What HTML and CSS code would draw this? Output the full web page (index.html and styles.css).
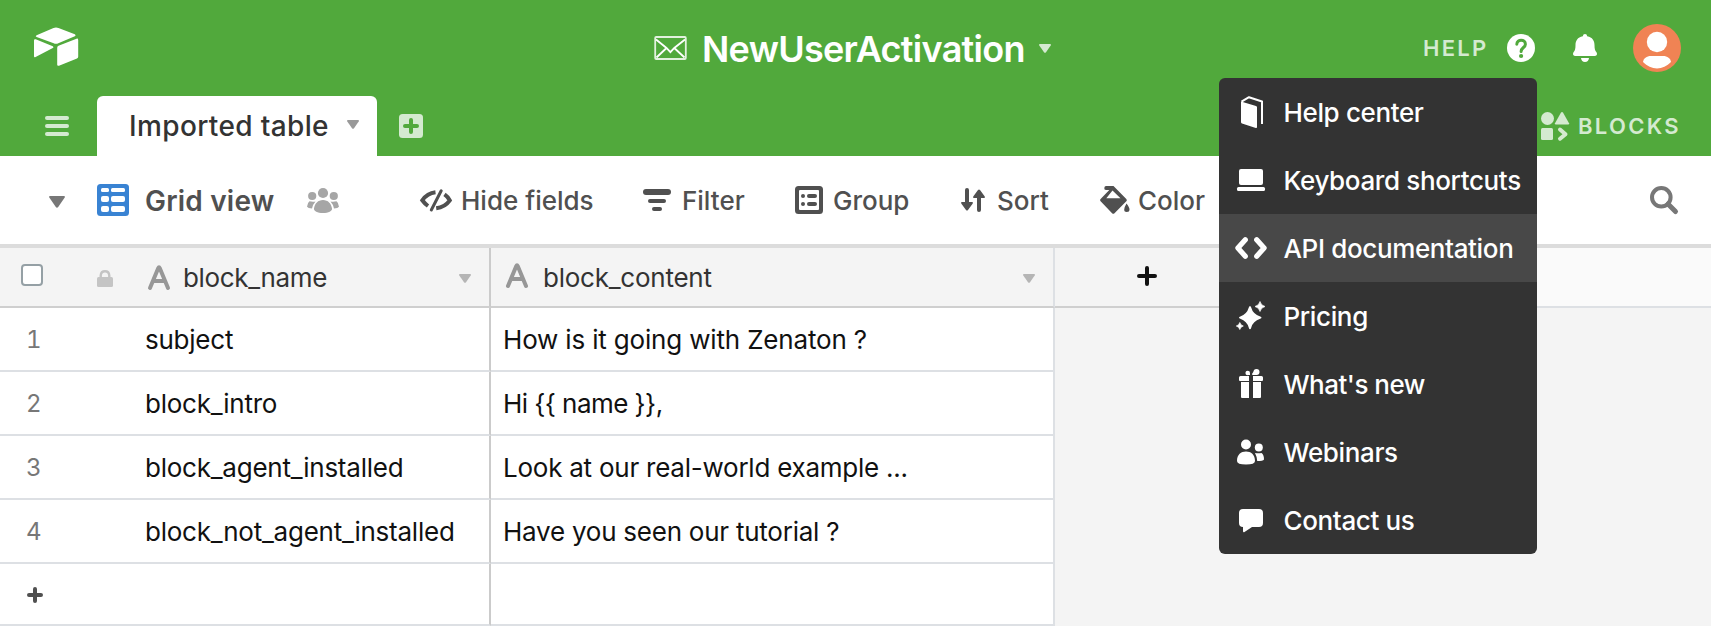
FILE: index.html
```html
<!DOCTYPE html>
<html lang="en">
<head>
<meta charset="utf-8">
<title>NewUserActivation</title>
<link rel="stylesheet" href="styles.css">
</head>
<body>
<header class="header">
  <div class="topbar">
    <svg class="logo" width="46" height="40" viewBox="0 0 46 40" fill="#fff"><path d="M3.600 8.200 20.500.900q2.500-1 5 0L41.800 7.300q1.800.900 0 1.900L25.300 16.300q-2.300 1-4.600 0L3.600 10.100q-1.800-.900 0-1.900z"/><path d="M1 13.500q0-1.700 1.700-1.200L19.800 19.300q1.500.900 0 1.800L2.600 29.900Q1 30.900 1 29z"/><path d="M24.200 20.700q0-1.500 1.300-2L43.500 11.700q1.700-.500 1.700 1.300V29.700q0 1.200-1.200 1.700L26 38.700q-1.800.600-1.800-1z"/></svg>
    <div class="base">
      <svg class="mail" width="33" height="24" viewBox="0 0 33 24" fill="none" stroke="#fff" stroke-width="1.800"><rect x="1.200" y="1" width="30.600" height="22" rx="1" stroke="#e2f1de"/><path d="M2 3.500 12.500 12l3.900 4.200 3.900-4.200L31 3.500M2.500 21.500 12.500 12M30.500 21.500 20.300 12"/></svg>
      <h1 class="base-name">NewUserActivation</h1>
      <svg class="caret" width="12" height="9" viewBox="0 0 12 9" fill="#d4ead0"><path d="M1 0h10q1.500 0 .7 1.400L7 8.300q-1 1-2 0L.3 1.400Q-.5 0 1 0z"/></svg>
    </div>
    <span class="help">HELP</span>
    <svg class="question" width="28" height="28" viewBox="0 0 28 28"><circle cx="14" cy="14" r="14" fill="#fff"/><path d="M9.800 10.300C10 4.800 18.400 5 18.400 10.200c0 3.500-4.300 3.200-4.300 7.400" fill="none" stroke="#51a93c" stroke-width="3" stroke-linecap="round"/><circle cx="14.100" cy="22" r="2.100" fill="#51a93c"/></svg>
    <svg class="bell" width="24" height="28" viewBox="0 0 24 28" fill="#fff"><path d="M12 0q2 0 2.200 2.200C19.500 3 21.500 7 21.500 11c0 4 .5 5.500 2 7.300 1 1.500.5 3.700-1.500 3.700H2c-2 0-2.500-2.200-1.500-3.700 1.500-1.800 2-3.300 2-7.300 0-4 2-8 7.300-8.800Q10 0 12 0zM8 24h8q-.5 4-4 4t-4-4z"/></svg>
    <svg class="avatar" width="48" height="48" viewBox="0 0 48 48"><circle cx="24" cy="24" r="24" fill="#f08354"/><circle cx="24" cy="18" r="10.200" fill="#fff"/><path d="M18 32h12c4.500 0 7.500 2.500 8 6-8 8.500-20 8.500-28 0 .5-3.500 3.500-6 8-6z" fill="#fff"/></svg>
  </div>
  <div class="tabs">
    <svg class="burger" width="24" height="20" viewBox="0 0 24 20" fill="#d4ead0"><rect width="24" height="4" rx="2"/><rect y="8" width="24" height="4" rx="2"/><rect y="16" width="24" height="4" rx="2"/></svg>
    <div class="tab"><span class="tab-name">Imported table</span><svg class="caret" width="12" height="9" viewBox="0 0 12 9" fill="#999"><path d="M1 0h10q1.500 0 .7 1.400L7 8.300q-1 1-2 0L.3 1.400Q-.5 0 1 0z"/></svg></div>
    <svg class="add-tab" width="24" height="24" viewBox="0 0 24 24"><rect width="24" height="24" rx="3.500" fill="#d4ead0"/><path d="M12 6v12M6 12h12" stroke="#51a93c" stroke-width="4" stroke-linecap="round"/></svg>
    <svg class="blocks-icon" width="28" height="29" viewBox="0 0 28 29" fill="#d4ead0"><circle cx="6.500" cy="6.500" r="6.500"/><path d="M20 .6q1-1.200 2 0l6 10.600q.5 1.300-1 1.300H15q-1.500 0-1-1.300z"/><rect y="16" width="12" height="12" rx="1.500"/><path d="M19 17.500l5.500 4.700-5.500 4.500" fill="none" stroke="#d4ead0" stroke-width="4" stroke-linecap="round" stroke-linejoin="round"/></svg>
    <span class="blocks">BLOCKS</span>
  </div>
</header>

<nav class="toolbar">
  <svg class="view-caret" width="16" height="12" viewBox="0 0 16 12" fill="#777"><path d="M1 0h14q1.600 0 .7 1.500L9.200 11q-1.200 1.400-2.400 0L.3 1.500Q-.6 0 1 0z"/></svg>
  <svg class="grid-icon" width="32" height="32" viewBox="0 0 32 32"><rect width="32" height="32" rx="3.500" fill="#3983d3"/><g fill="#fff"><rect x="4" y="4" width="8" height="4" rx="1.500"/><rect x="14" y="4" width="14" height="4" rx="1.500"/><rect x="4" y="12" width="8" height="6" rx="2"/><rect x="14" y="12" width="14" height="6" rx="2"/><rect x="4" y="22" width="8" height="6" rx="2"/><rect x="14" y="22" width="14" height="6" rx="2"/></g></svg>
  <span class="view-name">Grid view</span>
  <svg class="people" width="32" height="25" viewBox="0 0 32 25" fill="#a6a6a6"><circle cx="16" cy="5" r="5.100"/><circle cx="5.200" cy="8" r="4.100"/><circle cx="26.800" cy="8" r="4.100"/><path d="M16 12c5 0 8.200 3.500 9 8.500.4 2.500-3.500 4.600-9 4.600s-9.400-2.100-9-4.600c.8-5 4-8.500 9-8.500z"/><path d="M2.500 13.300q3 .8 6 .2-2.800 3-3.500 7-4-.2-5-1.800.2-3.700 2.500-5.400zM29.500 13.300q-3 .8-6 .2 2.800 3 3.500 7 4-.2 5-1.800-.2-3.700-2.500-5.400z"/></svg>
  <div class="tool hide"><svg width="32" height="23" viewBox="0 0 32 23" fill="none" stroke="#505050" stroke-width="4"><path d="M15.500 3.300C9.500 4 5 7.500 2.300 11.300 3.900 13.500 5.500 15.200 8 17"/><path d="M24.500 5.300c2.500 1.700 4 3.500 5.300 6-2.800 4-7.500 7.200-13.600 8"/><path d="M21.200 1.800 11.300 21" stroke-width="3" stroke-linecap="round"/></svg><span>Hide fields</span></div>
  <div class="tool filter"><svg width="28" height="22" viewBox="0 0 28 22" fill="#505050"><rect width="28" height="6" rx="3"/><rect x="5" y="10" width="18" height="4" rx="2"/><rect x="9" y="18" width="10" height="4" rx="2"/></svg><span>Filter</span></div>
  <div class="tool group"><svg width="28" height="28" viewBox="0 0 28 28" fill="#505050"><path fill-rule="evenodd" d="M3.500 0h21A3.500 3.500 0 0 1 28 3.500v21a3.500 3.500 0 0 1-3.500 3.500h-21A3.500 3.500 0 0 1 0 24.500v-21A3.500 3.500 0 0 1 3.500 0zM5 4Q4 4 4 5v18q0 1 1 1h18q1 0 1-1V5q0-1-1-1z"/><circle cx="8" cy="10" r="2"/><circle cx="8" cy="18" r="2"/><rect x="12" y="8" width="10" height="4" rx="2"/><rect x="12" y="16" width="10" height="4" rx="2"/></svg><span>Group</span></div>
  <div class="tool sort"><svg width="24" height="24" viewBox="0 0 24 24" fill="#505050"><path d="M4 2q0-2 2-2t2 2v12h3q1.800.200.600 1.800L7 22q-1 1-2 0L.400 15.800Q-.800 14.200 1 14h3zM16 22q0 2 2 2t2-2V10h3q1.800-.200.600-1.800L19 2q-1-1-2 0l-4.600 6.200Q11.200 9.800 13 10h3z"/></svg><span>Sort</span></div>
  <div class="tool color"><svg width="30" height="28" viewBox="0 0 30 28" fill="#505050"><path fill-rule="evenodd" d="M6 0h7.500L26.300 13q1.200 1.200 0 2.300L14.500 27.300q-1.200 1-2.400 0L.6 15.300q-1.200-1.200 0-2.300L9.300 4H6Q4 3.800 4.300 2 4.500 0 6 0zM12.500 4.500 6.300 12.200H20.500z"/><path d="M26.500 17.500q3 3.800 3 6 0 2.500-2.700 2.500T24.200 23.500q0-2.200 2.300-6z"/></svg><span>Color</span></div>
  <svg class="search" width="28" height="28" viewBox="0 0 28 28" fill="none" stroke="#777"><circle cx="11.300" cy="11.300" r="9.300" stroke-width="4"/><path d="M18 18l7.500 7.500" stroke-width="5" stroke-linecap="round"/></svg>
</nav>

<main class="grid">
  <div class="row head">
    <div class="cell primary">
      <i class="check"></i>
      <svg class="lock" width="16" height="17" viewBox="0 0 16 17"><rect y="7" width="16" height="10" rx="1.500" fill="#c4c4c4"/><path d="M3.700 8V5.500Q4 1.200 8 1.200t4.300 4.300V8" fill="none" stroke="#c4c4c4" stroke-width="2.400"/></svg>
      <svg class="type" width="22" height="25" viewBox="0 0 22 25" fill="none" stroke="#979797" stroke-width="4" stroke-linecap="round" stroke-linejoin="round"><path d="M2 23 10.300 3q.7-1.500 1.400 0L20 23M5.500 16h11"/></svg>
      <span class="field-name">block_name</span>
      <svg class="caret" width="12" height="9" viewBox="0 0 12 9" fill="#b5b5b5"><path d="M1 0h10q1.500 0 .7 1.400L7 8.300q-1 1-2 0L.3 1.400Q-.5 0 1 0z"/></svg>
    </div>
    <div class="cell second">
      <svg class="type raised" width="22" height="25" viewBox="0 0 22 25" fill="none" stroke="#979797" stroke-width="4" stroke-linecap="round" stroke-linejoin="round"><path d="M2 23 10.300 3q.7-1.500 1.400 0L20 23M5.500 16h11"/></svg>
      <span class="field-name">block_content</span>
      <svg class="caret" width="12" height="9" viewBox="0 0 12 9" fill="#b5b5b5"><path d="M1 0h10q1.500 0 .7 1.400L7 8.300q-1 1-2 0L.3 1.400Q-.5 0 1 0z"/></svg>
    </div>
    <div class="add-field"><svg width="20" height="20" viewBox="0 0 20 20" stroke="#111" stroke-width="4" stroke-linecap="round"><path d="M10 2v16M2 10h16"/></svg></div>
    <div class="rest"></div>
  </div>
  <div class="row"><div class="cell primary"><span class="num">1</span><span>subject</span></div><div class="cell second"><span class="snug">How is it going with Zenaton ?</span></div></div>
  <div class="row"><div class="cell primary"><span class="num">2</span><span>block_intro</span></div><div class="cell second"><span class="tight">Hi {{ name }},</span></div></div>
  <div class="row"><div class="cell primary"><span class="num">3</span><span>block_agent_installed</span></div><div class="cell second"><span>Look at our real-world example ...</span></div></div>
  <div class="row"><div class="cell primary"><span class="num">4</span><span>block_not_agent_installed</span></div><div class="cell second"><span>Have you seen our tutorial ?</span></div></div>
  <div class="row last"><div class="cell primary"><svg class="add-row" width="16" height="16" viewBox="0 0 16 16" stroke="#505050" stroke-width="4" stroke-linecap="round"><path d="M8 2v12M2 8h12"/></svg></div><div class="cell second"></div></div>
</main>

<div class="menu">
  <div class="item"><svg width="32" height="32" viewBox="0 0 32 32" fill="#fff"><path d="M6 5.500 21 10q1 .300 1 1.500V31q0 1.300-1.200.900L7 27.500Q6 27 6 26z"/><path d="M6.500 5.700 14 1.200 27 5.500V28" fill="none" stroke="#fff" stroke-width="2" stroke-linejoin="round"/></svg><span>Help center</span></div>
  <div class="item"><svg width="32" height="32" viewBox="0 0 32 32" fill="#fff"><rect x="4" y="5" width="24" height="16" rx="2"/><rect x="2" y="23" width="28" height="4" rx="1.500"/></svg><span>Keyboard shortcuts</span></div>
  <div class="item active"><svg width="32" height="32" viewBox="0 0 32 32" fill="none" stroke="#fff" stroke-width="5.200" stroke-linecap="round" stroke-linejoin="round"><path d="M10.300 7.800 2.900 16l7.400 8.200M21.700 7.800l7.400 8.200-7.400 8.200"/></svg><span>API documentation</span></div>
  <div class="item"><svg width="32" height="32" viewBox="0 0 32 32" fill="#fff"><path d="M15 6q.8 0 1.200 1.500 1.700 6.500 9 9Q26.500 17 26.500 17.700t-1.300 1q-7.300 2.300-9 9Q15.800 29.300 15 29.300t-1.200-1.600q-1.800-6.700-8.500-9Q4 18.300 4 17.600t1.300-1.100q6.700-2.500 8.500-9Q14.200 6 15 6z"/><path d="M25 1.500q1 4 5 5-4 1-5 5-1-4-5-5 4-1 5-5zM4.800 22.500q.7 2.800 3.500 3.500-2.800.700-3.500 3.500-.7-2.800-3.500-3.500 2.800-.7 3.500-3.500z" stroke="#fff" stroke-width=".7"/></svg><span>Pricing</span></div>
  <div class="item"><svg width="32" height="32" viewBox="0 0 32 32" fill="#fff"><path d="M4 9.500Q4 8 5.500 8H14v5H5Q4 13 4 12zM18 8h8.500Q28 8 28 9.500V12q0 1-1 1h-9zM6 14h8v16H7q-1 0-1-1zM18 14h8v15q0 1-1 1h-7z"/><circle cx="12.700" cy="5" r="2.300"/><circle cx="21.500" cy="4" r="3"/><path d="M12.500 4.500 15 5.500V7h-3zM20 2 17.200 5.500V7H22z"/></svg><span class="whats-new">What's new</span></div>
  <div class="item"><svg width="32" height="32" viewBox="0 0 32 32" fill="#fff"><circle cx="11" cy="8.500" r="5"/><circle cx="23.800" cy="11.500" r="4"/><path d="M11 15.500c5 0 9 3 9 9.500q0 3.500-9 3.500T2 25c0-6.500 4-9.500 9-9.500zM20 17q3.500.5 6.500 0 2.500 1.500 2.500 6.500-1 1.500-6.800 1.500-.5-5-2.200-8z"/></svg><span>Webinars</span></div>
  <div class="item"><svg width="32" height="32" viewBox="0 0 32 32" fill="#fff"><path d="M8 5h16q4 0 4 4v10q0 4-4 4H17l-7.500 5q-1.500.700-1.500-1V23Q4 23 4 19V9q0-4 4-4z"/></svg><span>Contact us</span></div>
</div>
</body>
</html>
```
FILE: styles.css
```css
* { box-sizing: border-box; }
body {
  margin: 0;
  width: 1711px;
  height: 626px;
  overflow: hidden;
  position: relative;
  background: #f4f4f4;
  font: 400 26px/32px Inter, "Liberation Sans", sans-serif;
  color: #111;
}
svg { display: block; flex: none; overflow: visible; }
span, h1 { white-space: pre; }

.header { height: 156px; background: #51a93c; }
.topbar { height: 96px; display: flex; align-items: center; padding: 0 30px 0 33px; }
.logo { margin-top: -2px; }
.base { display: flex; align-items: center; width: 770px; margin-left: 575px; }
.base-name { width: 322px; margin: 1px 15px 0 15px; font-size: 36px; font-weight: 600; line-height: 44px; letter-spacing: -0.72px; color: #fff; }
.base .caret { margin-top: 1px; }
.help, .blocks { font-size: 22px; font-weight: 600; letter-spacing: 2.3px; color: #d4ead0; }
.help { width: 84px; margin-left: -1px; }
.bell { margin-left: 38px; }
.avatar { margin-left: 36px; }

.tabs { height: 60px; display: flex; align-items: center; padding-left: 45px; }
.tab { width: 280px; height: 60px; margin-left: 28px; padding-left: 32px; display: flex; align-items: center; background: #fff; border-radius: 6px 6px 0 0; }
.tab-name { width: 218px; font-size: 28px; font-weight: 500; letter-spacing: 0.36px; color: #333; }
.tab .caret { margin-top: -3px; }
.add-tab { margin-left: 22px; }
.blocks-icon { margin-left: 1118px; }
.blocks { margin-left: 9px; }

.toolbar { height: 92px; padding: 0 33px 0 49px; display: flex; align-items: center; background: #fff; border-bottom: 4px solid #dcdcdc; }
.toolbar span { padding-top: 2px; }
.toolbar .view-caret { margin-top: 4px; }
.grid-icon { margin-left: 32px; }
.view-name { width: 162px; margin-left: 16px; font-size: 28px; font-weight: 600; letter-spacing: 0.2px; color: #505050; }
.people { margin-right: 81px; }
.tool { display: flex; align-items: center; font-weight: 500; color: #505050; }
.hide { width: 223px; gap: 9px; }
.filter { width: 152px; gap: 11px; }
.group { width: 166px; gap: 10px; }
.sort { width: 139px; gap: 12px; }
.color { width: 120px; gap: 8px; }
.search { margin-left: auto; }

.row { display: flex; height: 64px; }
.cell { display: flex; align-items: center; background: #fff; border-bottom: 2px solid #dde0e4; letter-spacing: -0.24px; }
.cell > span { padding-top: 2px; }
.primary { width: 491px; padding-left: 27px; border-right: 2px solid #cbcbcb; }
.second { width: 564px; padding-left: 12px; border-right: 2px solid #dde0e4; }
.snug { letter-spacing: -0.17px; }
.tight { letter-spacing: -0.55px; }
.num { width: 119px; margin-left: -1px; font-size: 24px; font-variant-numeric: tabular-nums; color: #777; }
.last { height: 62px; }
.add-row { margin-top: 2px; }
.head { height: 60px; color: #333; }
.head .cell, .add-field { background: #f4f4f4; border-bottom-color: #cfcfcf; }
.head .primary { padding-left: 21px; }
.head .second { padding-left: 15px; }
.head .caret { margin-top: 3px; }
.type { margin-top: 1px; }
.raised { margin-top: -3px; }
.check { width: 22px; height: 22px; margin-top: -4px; border: 2px solid #95a0a5; border-radius: 4px; background: #fff; }
.lock { margin: 3px 35px 0 54px; }
.field-name { width: 276px; margin-left: 13px; letter-spacing: -0.36px; }
.second .field-name { width: 480px; margin-left: 15px; letter-spacing: -0.24px; }
.add-field { width: 482px; padding: 18px 0 0 82px; border-bottom: 2px solid #cfcfcf; }
.rest { flex: 1; background: #fafafa; border-bottom: 2px solid #dde0e4; }

.menu { position: absolute; left: 1219px; top: 78px; width: 318px; border-radius: 6px; overflow: hidden; background: #333; color: #fff; }
.item { height: 68px; padding-left: 16px; display: flex; align-items: center; gap: 16.5px; font-weight: 500; letter-spacing: -0.36px; }
.item span { padding-top: 2px; }
.item .whats-new { letter-spacing: -0.5px; }
.active { background: #484848; }
```
